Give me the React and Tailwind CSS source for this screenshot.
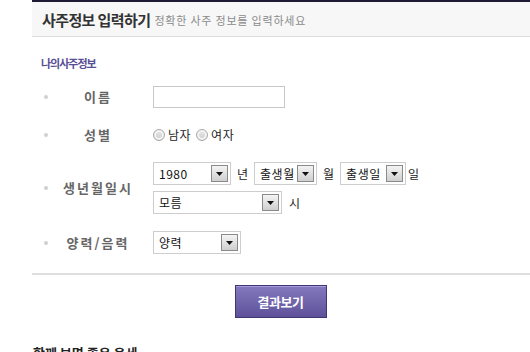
import React from "react";

function Arrow() {
  return (
    <div className="w-[17px] h-[17px] border border-[#8a8a8a] bg-gradient-to-b from-[#f4f4f4] to-[#cfcfcf] flex items-center justify-center shrink-0">
      <svg width="7" height="4" viewBox="0 0 7 4"><path d="M0 0H7L3.5 4Z" fill="#111" /></svg>
    </div>
  );
}

function Select({ w, text }) {
  return (
    <div className={`${w} h-[23px] border border-[#cdcdcd] bg-white flex items-center justify-between pl-[5px] pr-[2px]`}>
      <span className="text-[12px] text-[#111] leading-none tracking-[0.5px]">{text}</span>
      <Arrow />
    </div>
  );
}

function Radio() {
  return (
    <span className="inline-block w-[12px] h-[12px] rounded-full border border-[#a9a9a9] bg-gradient-to-b from-[#e9e9e9] to-[#cdcdcd] shadow-[inset_0_0_0_2px_#f4f4f4]" />
  );
}

function Row({ label, children, className = "" }) {
  return (
    <div className={`flex items-center ${className}`}>
      <div className="ml-[12px] w-[4px] h-[4px] rounded-full bg-[#d0d0d0]" />
      <div className="ml-[5px] w-[90px] text-center text-[13px] font-bold text-[#666] tracking-[2px]">{label}</div>
      <div className="ml-[10px]">{children}</div>
    </div>
  );
}

export default function App() {
  return (
    <div className="w-[530px] h-[352px] overflow-hidden bg-white font-['Noto_Sans_CJK_KR','Noto_Sans',sans-serif]">
      <div className="ml-[32px]">
        <div className="h-[2px] bg-[#1d1b33]" />
        <div className="h-[35px] bg-[#f7f7f8] border-b border-[#dcdcdc] flex items-center pl-[10px] gap-[4px]">
          <span className="text-[15px] font-bold text-[#333] tracking-[-0.6px] leading-none">사주정보 입력하기</span>
          <span className="text-[11px] text-[#8a8a8a] leading-none mt-[2px] tracking-[0.8px]">정확한 사주 정보를 입력하세요</span>
        </div>
        <div className="pt-[20px] pl-[9px] text-[11px] font-bold text-[#5a4f96] leading-[12px] tracking-[-1px]">나의사주정보</div>
        <Row label="이름" className="mt-[17px]">
          <div className="w-[132px] h-[22px] border border-[#c8c8c8] bg-white" />
        </Row>
        <Row label="성별" className="mt-[16px] h-[22px]">
          <div className="flex items-center gap-[3px] text-[12px] text-[#222] tracking-[0.5px]">
            <Radio /><span className="mr-[2px]">남자</span>
            <Radio /><span>여자</span>
          </div>
        </Row>
        <Row label="생년월일시" className="mt-[16px]">
          <div className="flex flex-col gap-[6px]">
            <div className="flex items-center text-[12px] text-[#222]">
              <Select w="w-[78px]" text="1980" />
              <span className="mx-[6px]">년</span>
              <Select w="w-[63px]" text="출생월" />
              <span className="mx-[6px]">월</span>
              <Select w="w-[66px]" text="출생일" />
              <span className="ml-[2px]">일</span>
            </div>
            <div className="flex items-center text-[12px] text-[#222]">
              <Select w="w-[129px]" text="모름" />
              <span className="ml-[7px]">시</span>
            </div>
          </div>
        </Row>
        <Row label="양력/음력" className="mt-[17px]">
          <Select w="w-[88px]" text="양력" />
        </Row>
        <div className="mt-[19px] h-[2px] bg-[#dedede]" />
        <div className="mt-[10px] flex justify-center pr-[1px]">
          <div className="w-[92px] h-[33px] border border-[#3f3772] bg-gradient-to-b from-[#8479bf] to-[#5e5199] flex items-center justify-center text-white text-[13px] font-bold tracking-[-0.5px] shadow-[inset_0_1px_0_#a59ddb]">
            결과보기
          </div>
        </div>
        <div className="mt-[28px] pl-[1px] text-[13px] font-bold text-[#222] leading-none">함께 보면 좋은 운세</div>
      </div>
    </div>
  );
}
